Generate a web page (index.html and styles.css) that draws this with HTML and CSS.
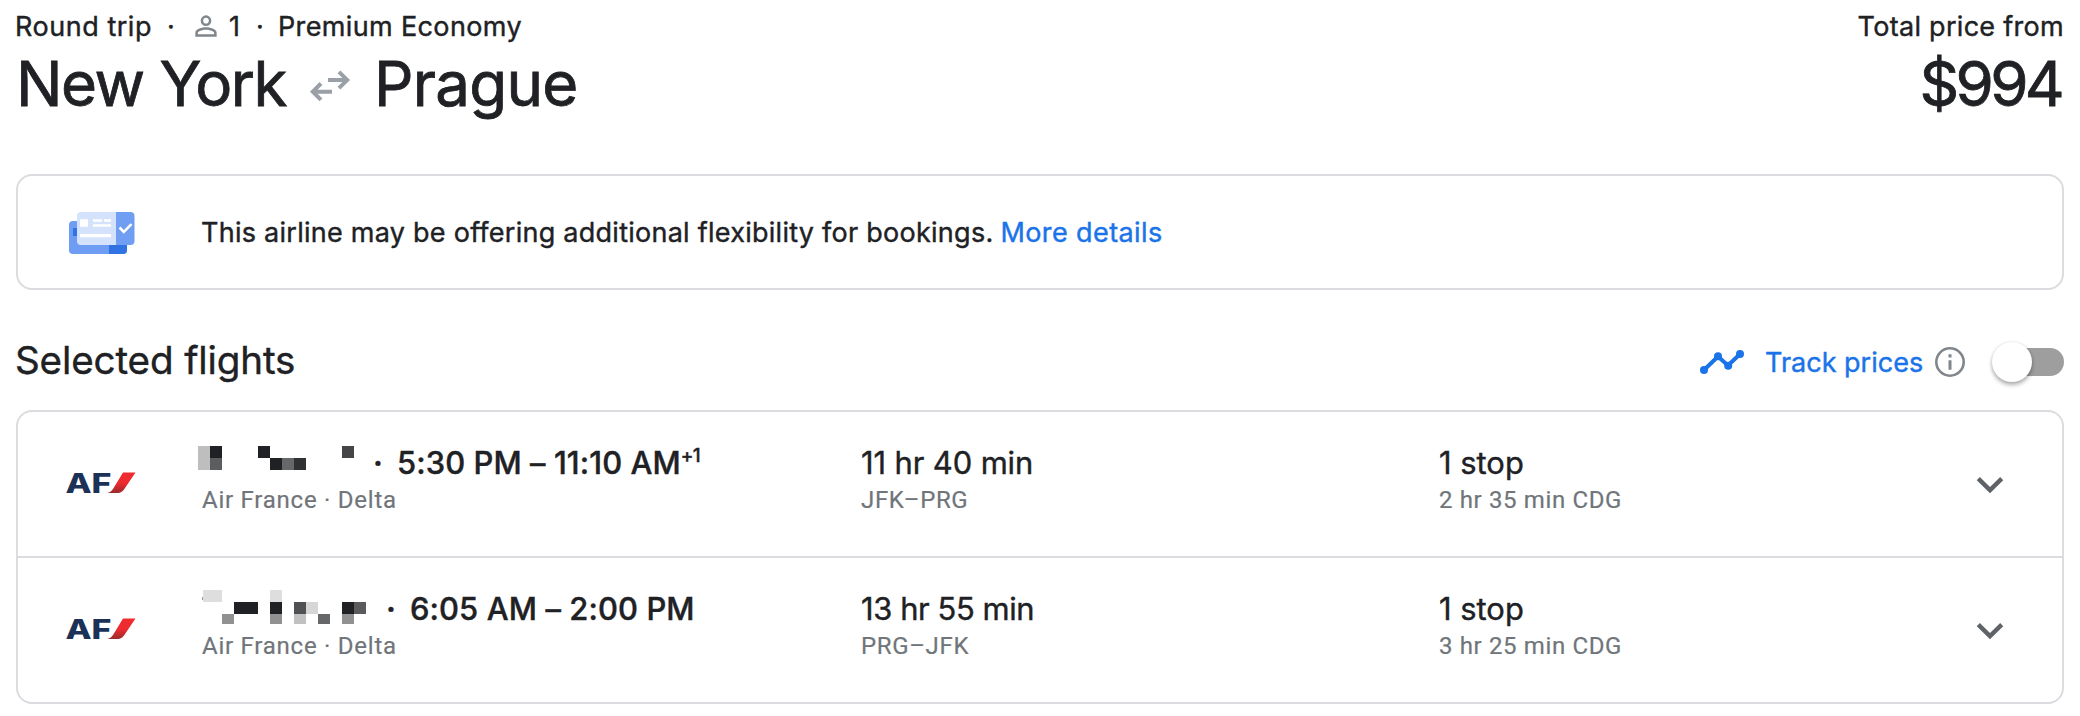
FILE: index.html
```html
<!DOCTYPE html>
<html lang="en">
<head>
<meta charset="utf-8">
<title>New York to Prague</title>
<link rel="stylesheet" href="styles.css">
</head>
<body>
<header class="trip">
  <div class="trip-main">
    <div class="meta">
      <span class="meta-type">Round trip</span>
      <span class="meta-dot">·</span>
      <svg class="meta-person" viewBox="0 0 24 24"><path d="M12 4a4 4 0 1 0 0 8 4 4 0 0 0 0-8zm0 1.9a2.1 2.1 0 1 1 0 4.2 2.1 2.1 0 0 1 0-4.2zM12 13c-2.67 0-8 1.34-8 4v3h16v-3c0-2.66-5.33-4-8-4zm0 1.9c2.97 0 6.1 1.46 6.1 2.1v1.1H5.9V17c0-.64 3.13-2.1 6.1-2.1z"/></svg>
      <span class="meta-count">1</span>
      <span class="meta-dot">·</span>
      <span class="meta-cabin">Premium Economy</span>
    </div>
    <h1 class="route">
      <span class="route-from">New York</span>
      <svg class="route-arrows" viewBox="0 0 40 32"><path d="M18 10h19M29 1.8 37.2 10 29 18.2M22 21.7H3M11 13.5 2.8 21.7 11 29.9"/></svg>
      <span class="route-to">Prague</span>
    </h1>
  </div>
  <div class="price">
    <div class="price-label">Total price from</div>
    <div class="price-value">$994</div>
  </div>
</header>

<section class="notice">
  <svg class="notice-icon" viewBox="0 0 66 42">
    <rect y="9" width="58" height="33" rx="4" fill="#6f9df3"/>
    <path d="M40 30h18v8a4 4 0 0 1-4 4H40z" fill="#3273e3"/>
    <path d="M4 16h5v8H4z" fill="#3273e3"/>
    <path d="M12 0h35v33H12a4 4 0 0 1-4-4V4a4 4 0 0 1 4-4z" fill="#d5e2fb"/>
    <path d="M47 0h14.500a4 4 0 0 1 4 4v25a4 4 0 0 1-4 4H47z" fill="#709ef2"/>
    <path d="M11 7.300h8v7.400h-8zM24 7.300h9v2.500h-9zM35 7.300h7v2.500h-7zM24 12.300h18v2.500H24zM11 22h31v3.200H11z" fill="#fff"/>
    <path d="m50.500 15.500 4.300 4.300 7.700-7.700" fill="none" stroke="#fff" stroke-width="2.600"/>
  </svg>
  <p class="notice-text"><span class="notice-copy">This airline may be offering additional flexibility for bookings.</span><a class="notice-link">More details</a></p>
</section>

<div class="section-head">
  <h2 class="section-title">Selected flights</h2>
  <div class="track">
    <svg class="track-icon" viewBox="0 0 44 24"><path d="M4 20 18 6.500 28 15.500 40 4" fill="none" stroke="#1a73e8" stroke-width="4"/><g fill="#1a73e8"><circle cx="4" cy="20" r="4"/><circle cx="18" cy="6.300" r="4"/><circle cx="28.200" cy="15.800" r="4"/><circle cx="40" cy="4" r="4"/></g></svg>
    <span class="track-label">Track prices</span>
    <svg class="track-info" viewBox="0 0 30 30"><circle cx="15" cy="15" r="13.700" fill="none" stroke="#80868b" stroke-width="2.600"/><path d="M13.500 7.200h3v3.200h-3zM13.500 13.200h3v9.600h-3z" fill="#80868b"/></svg>
    <span class="toggle"><span class="toggle-thumb"></span></span>
  </div>
</div>

<section class="flights">
  <article class="flight">
    <svg class="logo" viewBox="0 0 70 22">
      <defs><linearGradient id="ribbon" x1="0" y1="0" x2="0" y2="1"><stop offset=".5" stop-color="#ee2c30"/><stop offset="1" stop-color="#9c2a2e"/></linearGradient></defs>
      <text class="logo-text" x="-.5" y="20.800" textLength="46" lengthAdjust="spacingAndGlyphs">AF</text>
      <path d="M57 .500h12.500L58 17.500q-2.500 3.400-6 3.400H41.200q3.500-.4 5.800-4z" fill="url(#ribbon)"/>
    </svg>
    <div class="info">
      <div class="line">
        <svg class="mosaic mosaic-out" viewBox="0 0 168 24" shape-rendering="crispEdges">
          <path d="M0 0h12v24H0z" fill="#bebebe"/>
          <path d="M12 0h12v12H12zM60 0h12v12H60zM72 12h12v12H72z" fill="#202124"/>
          <path d="M12 12h12v12H12z" fill="#5c5d5f"/>
          <path d="M84 12h12v12H84z" fill="#666769"/>
          <path d="M96 12h12v12H96z" fill="#303133"/>
          <path d="M144 0h12v12h-12z" fill="#454547"/>
        </svg>
        <span class="line-dot">·</span>
        <span class="times times-out">5:30 PM – 11:10 AM</span><sup class="plus">+1</sup>
      </div>
      <div class="sub sub-carrier">Air France · Delta</div>
    </div>
    <div class="duration">
      <div class="line duration-out">11 hr 40 min</div>
      <div class="sub">JFK–PRG</div>
    </div>
    <div class="stops">
      <div class="line">1 stop</div>
      <div class="sub">2 hr 35 min CDG</div>
    </div>
    <svg class="chevron" viewBox="0 0 28 18"><path d="m2.300 2.600 11.700 11.500L25.700 2.600"/></svg>
  </article>
  <article class="flight">
    <svg class="logo" viewBox="0 0 70 22">
      <text class="logo-text" x="-.5" y="20.800" textLength="46" lengthAdjust="spacingAndGlyphs">AF</text>
      <path d="M57 .500h12.500L58 17.500q-2.500 3.400-6 3.400H41.200q3.500-.4 5.800-4z" fill="url(#ribbon)"/>
    </svg>
    <div class="info">
      <div class="line">
        <svg class="mosaic mosaic-back" viewBox="0 0 181 34" shape-rendering="crispEdges">
          <path d="M5 0h19v12H5zM72 0h12v12H72z" fill="#dedede"/>
          <path d="M4 7h1v3H4z" fill="#999"/>
          <path d="M36 12h24v12H36zM72 12h12v12H72zM144 12h12v12h-12z" fill="#202124"/>
          <path d="M96 12h12v12H96z" fill="#505153"/>
          <path d="M108 12h12v12h-12z" fill="#d6d6d6"/>
          <path d="M156 12h12v12h-12z" fill="#5b5b5d"/>
          <path d="M24 24h12v10H24zM72 24h12v10H72zM144 24h12v10h-12z" fill="#919191"/>
          <path d="M96 24h12v10H96z" fill="#c1c1c1"/>
          <path d="M120 24h12v10h-12z" fill="#666769"/>
        </svg>
        <span class="line-dot">·</span>
        <span class="times times-back">6:05 AM – 2:00 PM</span>
      </div>
      <div class="sub sub-carrier">Air France · Delta</div>
    </div>
    <div class="duration">
      <div class="line duration-back">13 hr 55 min</div>
      <div class="sub">PRG–JFK</div>
    </div>
    <div class="stops">
      <div class="line">1 stop</div>
      <div class="sub">3 hr 25 min CDG</div>
    </div>
    <svg class="chevron" viewBox="0 0 28 18"><path d="m2.300 2.600 11.700 11.500L25.700 2.600"/></svg>
  </article>
</section>
</body>
</html>
```
FILE: styles.css
```css
* { box-sizing: border-box; }
body {
  margin: 0;
  padding: 0 16px;
  height: 716px;
  background: #fff;
  color: #202124;
  font-family: Inter, "Liberation Sans", sans-serif;
  -webkit-text-stroke: .4px currentColor;
}
svg { display: block; flex: none; overflow: visible; }
h1, h2, p { margin: 0; font-weight: 400; }

/* Trip header */
.trip { display: flex; justify-content: space-between; height: 174px; padding-top: 7px; }
.meta { display: flex; align-items: center; height: 40px; margin-left: -1px; font-size: 27px; line-height: 40px; white-space: nowrap; }
.meta-type { width: 143px; letter-spacing: .53px; }
.meta-dot { width: 26px; text-align: center; }
.meta-person { width: 32px; height: 32px; margin: -2px 0 0 6px; fill: #80868b; }
.meta-count { width: 18px; margin-left: 7px; }
.meta-cabin { margin-left: 5px; letter-spacing: .36px; }
.route { display: flex; margin-top: 1px; font-size: 61.8px; line-height: 72px; white-space: nowrap; -webkit-text-stroke-width: .8px; }
.route-from { width: 294px; letter-spacing: -1.5px; }
.route-arrows { width: 40px; height: 32px; margin-top: 22px; fill: none; stroke: #9aa0a6; stroke-width: 4; }
.route-to { margin-left: 24px; letter-spacing: -.7px; }
.price { text-align: right; white-space: nowrap; }
.price-label { font-size: 27px; line-height: 40px; letter-spacing: .29px; }
.price-value { margin: 1px 3px 0 0; font-size: 61.8px; line-height: 72px; letter-spacing: -3.7px; -webkit-text-stroke-width: .8px; }

/* Flexibility notice */
.notice { display: flex; height: 116px; border: 2px solid #dadce0; border-radius: 16px; padding: 36px 0 0 51px; }
.notice-icon { width: 66px; height: 42px; }
.notice-text { margin: 1px 0 0 66px; font-size: 27px; line-height: 40px; white-space: nowrap; }
.notice-copy { letter-spacing: .26px; }
.notice-link { margin-left: 7px; color: #1a73e8; letter-spacing: .4px; }

/* Section heading */
.section-head { display: flex; justify-content: space-between; height: 120px; padding-top: 46px; }
.section-title { margin-left: -1px; font-size: 38.6px; line-height: 48px; letter-spacing: -.13px; }
.track { display: flex; align-items: center; height: 52px; }
.track-icon { width: 44px; height: 24px; }
.track-label { width: 170px; margin: 1px 0 0 21px; color: #1a73e8; font-size: 27px; line-height: 40px; letter-spacing: 0; }
.track-info { width: 30px; height: 30px; }
.toggle { width: 68px; height: 28px; margin-left: 31px; border-radius: 14px; background: #9e9e9e; }
.toggle-thumb { display: block; width: 40px; height: 40px; margin: -6px 0 0 -4px; border-radius: 50%; background: #fff; box-shadow: 0 3px 4px rgba(0, 0, 0, .3), 0 0 3px rgba(0, 0, 0, .12); }

/* Flight list */
.flights { height: 294px; border: 2px solid #dadce0; border-radius: 16px; }
.flight { display: grid; grid-template-columns: 180px 663px 578px 537px 28px; height: 144px; padding-top: 31px; }
.flight + .flight { height: 146px; border-top: 2px solid #dadce0; }
.logo { width: 70px; height: 22px; margin: 29px 0 0 48px; }
.logo-text { fill: #1b3157; font-size: 26.500px; font-weight: 800; }
.line { display: flex; height: 40px; font-size: 30.9px; line-height: 40px; white-space: nowrap; }
.mosaic-out { width: 168px; height: 24px; margin-top: 3px; }
.mosaic-back { width: 181px; height: 34px; margin-top: 1px; }
.line-dot { width: 24px; text-align: center; font-weight: 600; }
.times { margin-left: 7px; font-weight: 500; }
.times-out { letter-spacing: .1px; }
.times-back { letter-spacing: .12px; }
.plus { margin-left: 0; font-size: 19px; font-weight: 500; line-height: 26px; letter-spacing: -.8px; }
.duration-out { letter-spacing: -.1px; }
.duration-back { letter-spacing: -.4px; }
.sub { margin-top: 1px; color: #70757a; font-family: Roboto, "Liberation Sans", sans-serif; font-size: 24px; line-height: 32px; letter-spacing: .64px; white-space: nowrap; -webkit-text-stroke-width: .2px; }
.sub-carrier { padding-left: 4px; letter-spacing: .76px; }
.chevron { width: 28px; height: 18px; margin-top: 33px; fill: none; stroke: #5f6368; stroke-width: 4.400; }
```
